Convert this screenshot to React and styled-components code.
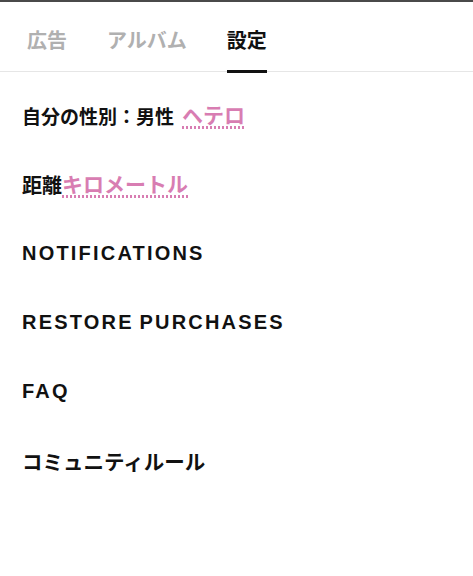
import styled, { createGlobalStyle } from "styled-components";

const GlobalStyle = createGlobalStyle`
  html, body {
    margin: 0;
    padding: 0;
    background: #fff;
  }
  body {
    font-family: "Noto Sans CJK JP", "Noto Sans", sans-serif;
  }
`;

const PINK = "#d87db2";

const tabs = [
  { label: "広告", active: false },
  { label: "アルバム", active: false },
  { label: "設定", active: true },
];

const Page = styled.div`
  width: 473px;
  min-height: 576px;
  border-top: 2px solid #4a4a4a;
  box-sizing: border-box;
`;

const TabBar = styled.div`
  display: flex;
  gap: 40px;
  padding-left: 27px;
  height: 69px;
  border-bottom: 1px solid #e6e6e6;
`;

const Tab = styled.div`
  display: flex;
  align-items: center;
  font-size: 20px;
  font-weight: 700;
  padding-top: 7px;
  color: ${(p) => (p.$active ? "#111" : "#b0b0b0")};
  border-bottom: 3px solid ${(p) => (p.$active ? "#111" : "transparent")};
  margin-bottom: -2px;
`;

const List = styled.div`
  display: flex;
  flex-direction: column;
  padding: 9px 0 0 22px;
`;

const Row = styled.div`
  height: 69px;
  display: flex;
  align-items: center;
  font-size: ${(p) => p.$size || "19px"};
  font-weight: 700;
  color: #111;
`;

const Latin = styled.span`
  font-family: "Liberation Sans", Arial, sans-serif;
  font-size: 20px;
  letter-spacing: 2.2px;
  word-spacing: -2px;
  white-space: pre;
`;

const Value = styled.span`
  color: ${PINK};
  font-size: 21px;
  margin-left: ${(p) => p.$gap || "0"};
  padding-bottom: 3px;
  background-image: linear-gradient(to right, ${PINK} 50%, transparent 50%);
  background-size: 4px 3px;
  background-repeat: repeat-x;
  background-position: 0 100%;
  line-height: 24px;
`;

export default function App() {
  return (
    <>
      <GlobalStyle />
      <Page>
        <TabBar>
          {tabs.map((t) => (
            <Tab key={t.label} $active={t.active}>
              {t.label}
            </Tab>
          ))}
        </TabBar>
        <List>
          <Row>
            自分の性別：男性<Value $gap="8px">ヘテロ</Value>
          </Row>
          <Row $size="20px">
            距離<Value>キロメートル</Value>
          </Row>
          <Row>
            <Latin>NOTIFICATIONS</Latin>
          </Row>
          <Row>
            <Latin>RESTORE PURCHASES</Latin>
          </Row>
          <Row>
            <Latin>FAQ</Latin>
          </Row>
          <Row $size="20.5px">コミュニティルール</Row>
        </List>
      </Page>
    </>
  );
}
